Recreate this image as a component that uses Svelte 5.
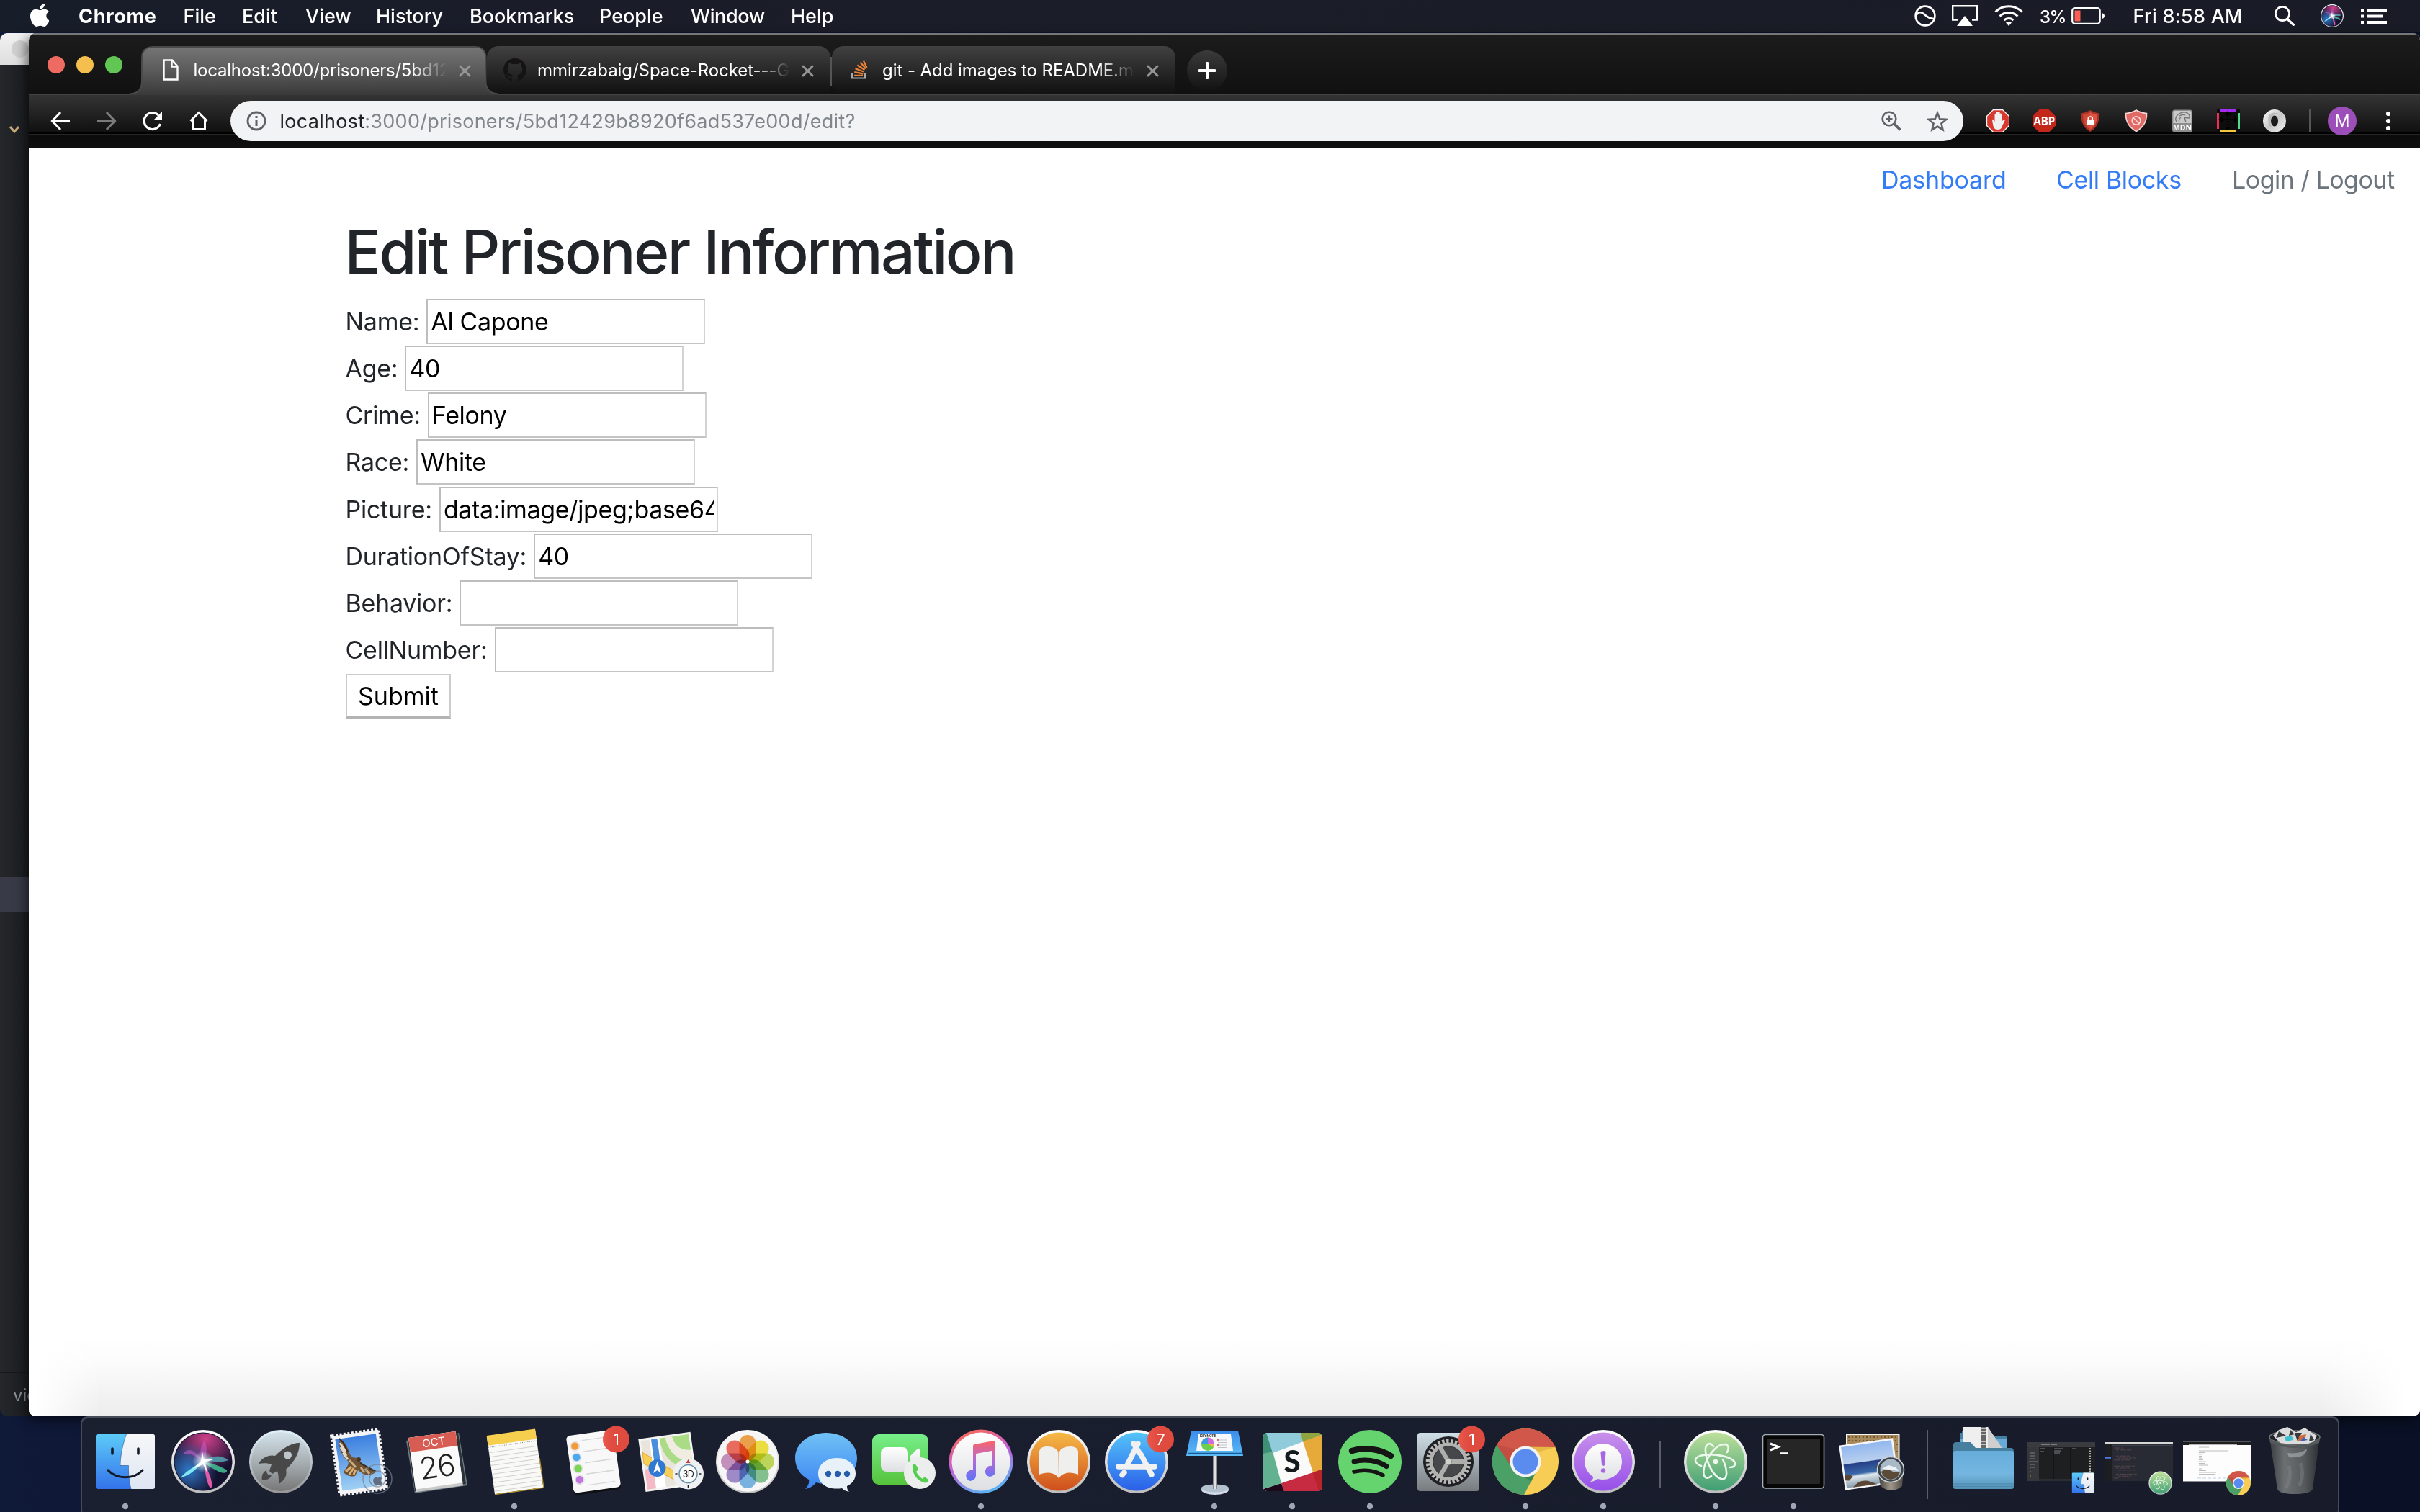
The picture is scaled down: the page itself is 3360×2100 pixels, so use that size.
<script>
  const menus = ['File', 'Edit', 'View', 'History', 'Bookmarks', 'People', 'Window', 'Help'];
  const tabs = [
    { title: 'localhost:3000/prisoners/5bd12429', icon: 'page', active: true },
    { title: 'mmirzabaig/Space-Rocket---GA', icon: 'github', active: false },
    { title: 'git - Add images to README.md', icon: 'stack', active: false }
  ];
  const fields = [
    { label: 'Name:', value: 'Al Capone' },
    { label: 'Age:', value: '40' },
    { label: 'Crime:', value: 'Felony' },
    { label: 'Race:', value: 'White' },
    { label: 'Picture:', value: 'data:image/jpeg;base64,/9j/4AAQ' },
    { label: 'DurationOfStay:', value: '40' },
    { label: 'Behavior:', value: '' },
    { label: 'CellNumber:', value: '' }
  ];
  const petals = ['#f29b38', '#f2e22e', '#bcd94a', '#7cc08a', '#6fb2e4', '#9a83c9', '#c489bd', '#f0604f'];
  const codeLines = [20, 34, 26, 8, 30, 40, 36, 12, 44, 50, 30, 38, 22, 46, 28, 10];
  const box = '-54 -63 108 133';
</script>

{#snippet finder()}
  <g>
    <rect x="-41" y="-38" width="82" height="76" rx="3" fill="url(#finderBlue)" />
    <path d="M1.5,-38 C-3,-26 -7,-8 -7,5 C-7,6 4.500,5 4.500,6 C4,18 6,30 8,38 L38,38 Q41,38 41,35 L41,-35 Q41,-38 38,-38 Z" fill="url(#finderWhite)" />
    <path d="M1.500,-38 C-3,-26 -7,-8 -7,5.500 L4.500,5.500 C4,18 6,30 8,38" fill="none" stroke="#20508c" stroke-width="1" opacity=".6" />
    <path d="M-18,-18 V-11 M18,-18 V-11" stroke="#151b26" stroke-width="3.600" stroke-linecap="round" />
    <path d="M-24,12 C-12,25 12,25 24,12" fill="none" stroke="#151b26" stroke-width="3.200" stroke-linecap="round" />
  </g>
{/snippet}

{#snippet chrome()}
  <g>
    <circle r="46" fill="#f7cd56" />
    <path d="M0,-46 A46,46 0 0 1 42,-20 L0,-20 L-20,8 L-40,-23 A46,46 0 0 1 0,-46Z" fill="#d0574a" />
    <path d="M-40,-23 A46,46 0 0 0 -2,46 L17,10 L-10,18 Z" fill="#4aa066" />
    <path d="M-40,-23 L-19,9 L-12,-17 Z" fill="#b8463a" opacity=".5" />
    <path d="M17,10 L8,28 L-4,20 Z" fill="#2f7d49" opacity=".6" />
    <path d="M0,-21 L42,-20 L20,-14 Z" fill="#d9a83a" opacity=".6" />
    <circle r="21.500" fill="#f3f3f3" />
    <circle r="17.500" fill="#5a8bef" />
  </g>
{/snippet}

{#snippet atom()}
  <g>
    <circle r="44" fill="url(#ring)" />
    <circle r="40.500" fill="url(#atomGreen)" />
    <g fill="none" stroke="#eef8ee" stroke-width="2.600" stroke-linecap="round">
      <path d="M-20,6 C-32,1 -30,-7 -17,-9 C0,-12 22,-6 26,0 C29,5 25,8 20,8" />
      <path d="M-3,-21 C-8,-28 -15,-25 -14,-14 C-13,2 -2,22 8,24 C16,26 18,14 10,-3" />
      <path d="M-6,20 C-15,28 -20,18 -14,2 C-8,-12 2,-24 12,-24 C18,-24 19,-19 16,-13" />
    </g>
    <circle r="3.200" fill="#eef8ee" />
  </g>
{/snippet}

{#snippet badge(n)}
  <circle cx="33.500" cy="-31" r="18.500" fill="#e04b40" />
  <circle cx="33.500" cy="-31" r="18.500" fill="url(#badgeGlow)" />
  <text x="33.500" y="-23.500" class="badge-text">{n}</text>
{/snippet}

{#snippet siri()}
  <g>
    <circle r="44" fill="url(#ring)" />
    <circle r="40.500" fill="#151230" />
    <circle r="39.500" fill="url(#siriTop)" />
    <circle r="39.500" fill="url(#siriLeft)" />
    <path d="M0,0 C-12,-18 -22,-20 -28,-10 C-18,-14 -8,-6 0,0 C6,-10 6,-20 2,-30 C-6,-18 -4,-8 0,0Z" fill="#c05ac8" opacity=".6" />
    <path d="M2,-2 C14,-10 28,-8 35,-2 C26,2 12,0 2,-2Z" fill="#4f9fae" opacity=".9" />
    <path d="M0,0 C12,2 28,8 33,12 C34,18 24,16 18,12 C10,8 4,4 0,0Z" fill="#3fb08a" opacity=".95" />
    <path d="M0,0 C-12,6 -24,14 -31,22 C-20,20 -8,10 0,0Z" fill="#7fe8f2" />
    <path d="M0,0 C3,12 4,28 10,37 C15,36 12,20 0,0Z" fill="#e05aa8" />
    <circle r="15" fill="url(#siriCore)" />
    <path d="M-1,-14 L1,-3 L14,-3 L3,1 L6,16 L0,4 L-14,10 L-3,-1Z" fill="#fff" opacity=".9" />
  </g>
{/snippet}

<div class="desktop">
  <svg class="defs" width="0" height="0" aria-hidden="true">
    <defs>
      <linearGradient id="finderBlue" x1="0" y1="0" x2="0" y2="1"><stop offset="0" stop-color="#5ccbf8" /><stop offset="1" stop-color="#3472ea" /></linearGradient>
      <linearGradient id="finderWhite" x1="0" y1="0" x2="0" y2="1"><stop offset="0" stop-color="#f7f7f8" /><stop offset="1" stop-color="#dde6f3" /></linearGradient>
      <linearGradient id="ring" x1="0" y1="0" x2="0" y2="1"><stop offset="0" stop-color="#ffffff" /><stop offset="1" stop-color="#bcbcbc" /></linearGradient>
      <linearGradient id="atomGreen" x1="0" y1="0" x2="0" y2="1"><stop offset="0" stop-color="#bde09a" /><stop offset="1" stop-color="#3f9e74" /></linearGradient>
      <linearGradient id="badgeGlow"><stop offset="0" stop-color="#f4695a" stop-opacity=".55" /><stop offset=".5" stop-color="#e04b40" stop-opacity="0" /></linearGradient>
      <radialGradient id="siriTop" cx=".55" cy=".1" r=".6"><stop offset="0" stop-color="#d0408a" /><stop offset="1" stop-color="#d0408a" stop-opacity="0" /></radialGradient>
      <radialGradient id="siriLeft" cx=".25" cy=".65" r=".5"><stop offset="0" stop-color="#2f78c8" /><stop offset="1" stop-color="#2f78c8" stop-opacity="0" /></radialGradient>
      <radialGradient id="siriCore"><stop offset="0" stop-color="#fff" /><stop offset="1" stop-color="#d8f0ff" stop-opacity="0" /></radialGradient>
      <linearGradient id="launch" x1="0" y1="0" x2="0" y2="1"><stop offset="0" stop-color="#d3e2ea" /><stop offset=".5" stop-color="#a8b0b4" /><stop offset="1" stop-color="#777" /></linearGradient>
      <linearGradient id="launchRing" x1="0" y1="0" x2="0" y2="1"><stop offset="0" stop-color="#e2f2fb" /><stop offset="1" stop-color="#969696" /></linearGradient>
      <linearGradient id="sky" x1="0" y1="0" x2="0" y2="1"><stop offset="0" stop-color="#3b7fe0" /><stop offset="1" stop-color="#9fd0f4" /></linearGradient>
      <linearGradient id="bubble" x1="0" y1="0" x2="0" y2="1"><stop offset="0" stop-color="#70c2f6" /><stop offset="1" stop-color="#3b84f3" /></linearGradient>
      <linearGradient id="facetime" x1="0" y1="0" x2="0" y2="1"><stop offset="0" stop-color="#76ee8a" /><stop offset="1" stop-color="#56c33c" /></linearGradient>
      <linearGradient id="paper" x1="0" y1="0" x2="0" y2="1"><stop offset="0" stop-color="#ffffff" /><stop offset="1" stop-color="#dedfe2" /></linearGradient>
      <linearGradient id="itunesRing" x1=".3" y1="0" x2=".7" y2="1"><stop offset="0" stop-color="#fb6a56" /><stop offset=".45" stop-color="#c35fd8" /><stop offset="1" stop-color="#50bdf8" /></linearGradient>
      <linearGradient id="note" x1="0" y1="0" x2="0" y2="1"><stop offset="0" stop-color="#fb6566" /><stop offset=".5" stop-color="#b06ad8" /><stop offset="1" stop-color="#5a74fa" /></linearGradient>
      <linearGradient id="books" x1="0" y1="0" x2="0" y2="1"><stop offset="0" stop-color="#f6ba46" /><stop offset="1" stop-color="#cf4e1c" /></linearGradient>
      <linearGradient id="store" x1="0" y1="0" x2="0" y2="1"><stop offset="0" stop-color="#54c4fa" /><stop offset="1" stop-color="#2a5fe8" /></linearGradient>
      <linearGradient id="board" x1="0" y1="0" x2="0" y2="1"><stop offset="0" stop-color="#3a8cea" /><stop offset="1" stop-color="#5cbcf6" /></linearGradient>
      <linearGradient id="pole"><stop offset="0" stop-color="#70757c" /><stop offset=".5" stop-color="#f5f5f5" /><stop offset="1" stop-color="#777" /></linearGradient>
      <linearGradient id="prefs" x1="0" y1="0" x2="0" y2="1"><stop offset="0" stop-color="#cfdfe8" /><stop offset="1" stop-color="#777b7e" /></linearGradient>
      <linearGradient id="feedback" x1="0" y1="0" x2="0" y2="1"><stop offset="0" stop-color="#c890ea" /><stop offset="1" stop-color="#9650ea" /></linearGradient>
      <linearGradient id="sea" x1="0" y1="0" x2="0" y2="1"><stop offset="0" stop-color="#8fb6ef" /><stop offset=".42" stop-color="#b9cfee" /><stop offset=".44" stop-color="#263f86" /><stop offset=".68" stop-color="#3968a8" /><stop offset=".74" stop-color="#dfe9ef" /><stop offset="1" stop-color="#7c93a3" /></linearGradient>
      <linearGradient id="barrel"><stop offset="0" stop-color="#3b3833" /><stop offset=".5" stop-color="#a0978a" /><stop offset="1" stop-color="#4a453e" /></linearGradient>
      <linearGradient id="folder" x1="0" y1="0" x2="0" y2="1"><stop offset="0" stop-color="#66addb" /><stop offset=".6" stop-color="#74b6e0" /><stop offset="1" stop-color="#5493b8" /></linearGradient>
      <linearGradient id="can"><stop offset="0" stop-color="#3a3d40" /><stop offset=".3" stop-color="#6c7073" /><stop offset=".7" stop-color="#55595c" /><stop offset="1" stop-color="#2b2e31" /></linearGradient>
      <linearGradient id="torus" x1="0" y1="0" x2="1" y2="1"><stop offset="0" stop-color="#fff" /><stop offset=".5" stop-color="#c8c8c8" /><stop offset="1" stop-color="#f2f2f2" /></linearGradient>
      <linearGradient id="tabFill" x1="0" y1="0" x2="0" y2="1"><stop offset="0" stop-color="#757575" /><stop offset=".5" stop-color="#5a5a5a" /><stop offset="1" stop-color="#393939" /></linearGradient>
    </defs>
  </svg>

  <header class="menubar">
    <svg class="apple" viewBox="4 32 366 448"><path fill="#fff" d="M318.700 268.700c-.2-36.700 16.400-64.400 50-84.800-18.800-26.900-47.200-41.700-84.700-44.600-35.500-2.800-74.300 20.700-88.500 20.700-15 0-49.400-19.700-76.400-19.700C63.300 141.200 4 184.800 4 273.500q0 39.300 14.400 81.200c12.800 36.700 59 126.700 107.200 125.200 25.200-.6 43-17.900 75.800-17.900 31.800 0 48.300 17.900 76.400 17.900 48.600-.7 90.400-82.500 102.600-119.300-65.200-30.700-61.700-90-61.700-91.900zm-56.600-164.200c27.300-32.400 24.800-61.900 24-72.500-24.100 1.400-52 16.400-67.900 34.900-17.500 19.800-27.800 44.300-25.600 71.900 26.100 2 49.900-11.400 69.500-34.300z" /></svg>
    <b>Chrome</b>
    {#each menus as m}<span>{m}</span>{/each}
    <i></i>
    <svg width="30" height="30" viewBox="0 0 30 30" fill="none" stroke="#fff" stroke-width="2.600"><circle cx="15" cy="15" r="13.400" /><path d="M2,15 C5,9 10,9 14,13 C18,17 22,19 27,19" /></svg>
    <svg width="36" height="30" viewBox="0 0 36 30"><path d="M8,20.500 H1.200 V1.200 H34.800 V20.500 H28" fill="none" stroke="#fff" stroke-width="2.400" /><path d="M18,15 L29,29 H7Z" fill="#fff" /></svg>
    <svg width="40" height="30" viewBox="0 0 40 30" fill="none" stroke="#fff" stroke-width="3"><path d="M1.500,9.500 A26,26 0 0 1 38.500,9.500 M7.500,15.500 A18,18 0 0 1 32.500,15.500 M13.500,21 A10,10 0 0 1 26.500,21" /><path d="M20,29 L16,24.500 Q20,22 24,24.500Z" fill="#fff" stroke="none" /></svg>
    <span class="percent">3%</span>
    <svg width="47" height="24" viewBox="0 0 47 24"><rect x="1.200" y="1.200" width="38.500" height="21.600" rx="3.500" fill="none" stroke="#fff" stroke-width="2.200" /><rect x="4.500" y="4.500" width="8" height="15" fill="#fb5f55" /><path d="M42.500,8 Q46,9 46,12 Q46,15 42.500,16Z" fill="#fff" /></svg>
    <span class="clock">Fri 8:58 AM</span>
    <svg width="30" height="28" viewBox="0 0 30 28" fill="none" stroke="#fff" stroke-width="2.600"><circle cx="11" cy="11" r="9.600" /><path d="M17.500,18 L27.500,27.500" stroke-width="3.400" /></svg>
    <svg width="32" height="32" viewBox="-44 -44 88 88">{@render siri()}</svg>
    <svg width="36" height="21" viewBox="0 0 36 21" fill="#fff"><path d="M0,0h4v4h-4zM8,0h28v4h-28zM0,8.500h4v4h-4zM8,8.500h22v4h-22zM0,17h4v4h-4zM8,17h28v4h-28z" /></svg>
  </header>

  <section class="editor">
    <div class="editor-bar"><span></span></div>
    <div class="editor-body">
      <svg width="16" height="12" viewBox="0 0 16 12"><path d="M2,2 L8,9 L14,2" fill="none" stroke="#c9a87a" stroke-width="3" /></svg>
      <div class="selected"></div>
    </div>
    <div class="editor-status">vic</div>
  </section>

  <section class="window">
    <div class="strip">
      <div class="lights"><span class="red"></span><span class="amber"></span><span class="green"></span></div>
      {#each tabs as t}
        <div class="tab" class:active={t.active}>
          {#if t.active}
            <svg class="shape" width="512" height="68" viewBox="-17 0 512 68">
              <path d="M-17,68 V66.500 C-6,66 0,61 0,49 V17 Q0,1 16,1 H462 Q477.500,1 477.500,17 V49 C477.500,61 484,66 495,66.500 V68Z" fill="url(#tabFill)" />
              <path d="M-17,66.500 C-6,66 0,61 0,49 V17 Q0,1 16,1 H462 Q477.500,1 477.500,17 V49 C477.500,61 484,66 495,66.500" fill="none" stroke="#4a4a4a" stroke-width="2" />
            </svg>
          {/if}
          <span class="fav">
            {#if t.icon === 'page'}
              <svg width="22" height="30" viewBox="0 0 22 30"><path d="M1.500,1.500 H13 L20.500,10 V28.500 H1.500Z M12.500,1.500 V10.500 H20.500" fill="none" stroke="#fff" stroke-width="2.400" /></svg>
            {:else if t.icon === 'github'}
              <svg width="32" height="32" viewBox="0 0 16 16"><path fill="#151313" d="M8 0C3.580 0 0 3.580 0 8c0 3.540 2.290 6.530 5.470 7.590.4.070.55-.17.55-.38 0-.19-.01-.82-.01-1.490-2.010.37-2.530-.49-2.690-.94-.09-.23-.48-.94-.82-1.130-.28-.15-.68-.52-.01-.53.63-.01 1.080.58 1.230.82.72 1.210 1.870.87 2.330.66.070-.52.280-.87.510-1.070-1.780-.2-3.640-.89-3.640-3.950 0-.87.310-1.590.820-2.150-.08-.2-.36-1.020.080-2.120 0 0 .67-.21 2.200.82.64-.18 1.320-.27 2-.27.680 0 1.360.090 2 .27 1.530-1.040 2.200-.82 2.200-.82.440 1.100.160 1.920.080 2.120.510.560.820 1.270.820 2.150 0 3.070-1.870 3.750-3.650 3.950.290.250.540.730.540 1.480 0 1.070-.01 1.930-.01 2.200 0 .210.150.460.550.380A8.013 8.013 0 0016 8c0-4.420-3.580-8-8-8z" /></svg>
            {:else}
              <svg width="24" height="26" viewBox="0 0 24 26" fill="none"><path d="M1,17 V24.500 H19 V17" stroke="#a9abae" stroke-width="2.200" /><path d="M4,20.800 H16 M4.300,16.200 L16.300,18.300 M5.500,11.300 L17,15.500 M8.300,6.500 L18.500,13 M12.500,2.500 L20,11.200 M17,0.500 L21.500,10" stroke="#ee8236" stroke-width="2.200" /></svg>
            {/if}
          </span>
          <span class="title">{t.title}</span>
          <svg class="close" width="17" height="17" viewBox="0 0 17 17"><path d="M2,2 L15,15 M15,2 L2,15" stroke="#969696" stroke-width="3" stroke-linecap="round" /></svg>
        </div>
      {/each}
      <div class="plus"><svg width="24" height="24" viewBox="0 0 24 24"><path d="M12,1.500 V22.500 M1.500,12 H22.500" stroke="#fff" stroke-width="4" stroke-linecap="round" /></svg></div>
    </div>

    <div class="toolbar">
      <span class="tool"><svg width="28" height="28" viewBox="0 0 28 28"><path d="M27,14 H3 M14,2 L2.500,14 L14,26" fill="none" stroke="#fff" stroke-width="3" /></svg></span>
      <span class="tool"><svg width="28" height="28" viewBox="0 0 28 28"><path d="M1,14 H25 M14,2 L25.500,14 L14,26" fill="none" stroke="#7a7a7a" stroke-width="3" /></svg></span>
      <span class="tool"><svg width="28" height="28" viewBox="0 0 28 28"><path d="M24.500,18 A11.500,11.500 0 1 1 22,6" fill="none" stroke="#fff" stroke-width="3.200" /><path d="M27,1 V12 H16Z" fill="#fff" /></svg></span>
      <span class="tool"><svg width="28" height="28" viewBox="0 0 28 28"><path d="M2.500,14 L14,2.500 L25.500,14 M5.500,12 V25.500 H22.500 V12" fill="none" stroke="#fff" stroke-width="3" /></svg></span>
      <div class="omnibox">
        <svg width="28" height="28" viewBox="0 0 28 28"><circle cx="14" cy="14" r="12" fill="none" stroke="#5f6368" stroke-width="2.800" /><path d="M14,7 V10 M14,12.300 V21" stroke="#5f6368" stroke-width="3" /></svg>
        <span class="url"><em>localhost</em>:3000/prisoners/5bd12429b8920f6ad537e00d/edit?</span>
        <svg class="zoomed" width="28" height="28" viewBox="0 0 28 28" fill="none" stroke="#5f6368"><circle cx="11" cy="11" r="9.300" stroke-width="2.600" /><path d="M17.500,17.500 L26.500,26.500" stroke-width="3.800" /><path d="M11,6.500 V15.500 M6.500,11 H15.500" stroke-width="2.200" /></svg>
        <svg class="star" width="30" height="29" viewBox="0 0 30 29"><path d="M15,3 L18.300,11.200 L27.200,11.900 L20.400,17.600 L22.500,26.200 L15,21.600 L7.500,26.200 L9.600,17.600 L2.800,11.900 L11.700,11.200Z" fill="none" stroke="#5f6368" stroke-width="2.600" /></svg>
      </div>
      <div class="extensions">
        <svg width="32" height="32" viewBox="0 0 32 32"><path d="M9.500,0.500 H22.500 L31.500,9.500 V22.500 L22.500,31.500 H9.500 L.5,22.500 V9.500Z" fill="#d8392f" stroke="#fff" stroke-width="1.300" /><path d="M8.500,18 Q7.500,13 9.500,14 L11.500,17 V6.500 Q12.700,5 13.700,6.500 V4 Q15,2.500 16.200,4 V4 Q17.500,2.800 18.700,4.300 V6 Q20,5 21.200,6.500 V17 L23.500,14.500 Q26,13.500 25.500,15.500 L21.500,24 Q20.500,28 16,28 Q10.500,28 9.500,23Z" fill="#f0f0f0" /></svg>
        <svg width="32" height="32" viewBox="0 0 32 32"><path d="M9.500,0 H22.500 L32,9.500 V22.500 L22.500,32 H9.500 L0,22.500 V9.500Z" fill="#c22719" /><text x="16" y="21.700" class="abp">ABP</text></svg>
        <svg width="32" height="32" viewBox="0 0 32 32"><path d="M16,1 Q22,4.500 29,5.500 Q29,24 16,31 Q3,24 3,5.500 Q10,4.500 16,1Z" fill="#a83225" /><path d="M16,4 Q21,7 26,7.700 Q26,22 16,28Z" fill="#dd5443" /><path d="M16,4 Q11,7 6,7.700 Q6,22 16,28Z" fill="#cf4838" /><rect x="11.500" y="14.500" width="9.500" height="6.500" fill="#fff" /><path d="M13.300,15 V12.500 Q13.300,10 16.200,10 Q19.200,10 19.200,12.500 V15" fill="none" stroke="#fff" stroke-width="1.600" /></svg>
        <svg width="32" height="32" viewBox="0 0 32 32"><path d="M16,1 Q21,4.500 30.500,5.500 Q31,22 16,30.500 Q1,22 1.500,5.500 Q11,4.500 16,1Z" fill="#e26a66" stroke="#f3d5d3" stroke-width="1.600" /><circle cx="16" cy="15.500" r="5.800" fill="none" stroke="#f6dcdb" stroke-width="1.600" /><path d="M12,11.500 L20,19.500" stroke="#f6dcdb" stroke-width="1.600" /></svg>
        <svg width="32" height="32" viewBox="0 0 32 32"><rect x="2" y=".5" width="28" height="31" rx="3.500" fill="#8c8c8c" /><path d="M3.500,4 Q3.500,2 5.500,2 H26.500 Q28.500,2 28.500,4 V19 H3.500Z" fill="#c9c9c9" /><path d="M9,18 Q4,13 10,7 Q17,2 23,5 Q27,8 26,12 Q22,12 19,11 L21,18 M12,9 Q17,6 20,8 M12,18 Q10,14 14,11" fill="none" stroke="#777" stroke-width="1.400" /><text x="16" y="29" class="mdn">MDN</text></svg>
        <svg width="32" height="32" viewBox="0 0 32 32"><rect width="32" height="32" fill="#0d0d0d" /><path d="M5,1.500 H27" stroke="#a32cf0" stroke-width="3" /><path d="M5,30.500 H27" stroke="#f2c93c" stroke-width="3" /><path d="M1.500,5 V27" stroke="#f02c5c" stroke-width="3" /><path d="M30.500,5 V27" stroke="#55d98a" stroke-width="3" /><path d="M15,2 L19,8 H11Z M15,29 L11,24 H19Z M2,14 L9,9.500 V18.500Z M29,14 L24,9.500 V18.500Z" fill="#000" /><path d="M9,14 H24 M15,8 V24" stroke="#000" stroke-width="2" stroke-dasharray="2 2" /></svg>
        <svg width="32" height="32" viewBox="0 0 32 32"><path fill-rule="evenodd" d="M16,0 A16,16 0 1 1 15.990,0Z M16,8.500 A5,7.500 0 1 0 16.010,8.500Z" fill="url(#torus)" /><path d="M8,8 Q14,2 22,6 Q14,5 11,14 Q9,22 14,27 Q5,22 8,8Z" fill="#9d9d9d" opacity=".5" /></svg>
      </div>
      <span class="rule"></span>
      <span class="avatar">M</span>
      <svg class="dots" width="8" height="28" viewBox="0 0 8 28" fill="#fff"><circle cx="4" cy="4" r="3.100" /><circle cx="4" cy="14" r="3.100" /><circle cx="4" cy="24" r="3.100" /></svg>
    </div>

    <div class="page">
      <nav><a class="n1">Dashboard</a><a class="n2">Cell Blocks</a><a class="n3">Login / Logout</a></nav>
      <div class="container">
        <h1>Edit Prisoner Information</h1>
        <form>
          {#each fields as f}
            <label><span>{f.label}</span><input type="text" value={f.value} /></label>
          {/each}
          <button type="button">Submit</button>
        </form>
      </div>
    </div>
  </section>

  <footer class="dock">
    <svg class="app" viewBox={box}>{@render finder()}<circle class="run" cy="62" r="4.200" /></svg>
    <svg class="app" viewBox={box}>{@render siri()}</svg>
    <svg class="app" viewBox={box}>
      <circle r="44" fill="url(#launchRing)" /><circle r="41" fill="url(#launch)" />
      <g fill="#484848"><path d="M26,-26 C14,-26 2,-18 -8,-8 C-16,-10 -26,-6 -31,3 C-24,2 -18,2 -13,4 L-16,13 L-12,17 L-5,13 C-3,18 -3,24 -3,31 C5,26 9,20 7,11 C19,0 26,-12 26,-26Z" /><path d="M-20,12 C-26,15 -27,21 -26,26 C-20,26 -15,24 -13,19 C-17,20 -20,17 -20,12Z" /></g>
      <circle cx="9.500" cy="-9" r="5.500" fill="#bcc6cb" />
    </svg>
    <svg class="app" viewBox={box}>
      <g transform="rotate(-8)">
        <rect x="-32" y="-40" width="65" height="82" fill="#f4f4f6" stroke="#f4f4f6" stroke-width="5" stroke-dasharray="3 2.500" />
        <rect x="-28" y="-35" width="57" height="72" fill="url(#sky)" />
      </g>
      <path d="M-26,-31 C-20,-29 -15,-20 -12,-10 C-8,-3 -4,-7 1,-4 L2,0 C8,6 16,10 24,13 C22,18 14,20 6,17 L-1,12 L-5,20 C-12,22 -18,18 -21,15 C-18,9 -14,6 -14,0 C-24,-8 -29,-20 -26,-31Z" fill="#6f5136" />
      <path d="M-26,-26 L-18,-14 M-25,-20 L-17,-8 M-22,-12 L-15,-3" stroke="#e2d8c4" stroke-width="3" fill="none" />
      <path d="M-13,-2 L-4,8 M3,8 L8,15 M9,10 L15,17" stroke="#c9ab7c" stroke-width="3" fill="none" />
      <path d="M-18,14 L-10,7 M-13,18 L-7,9 M-7,18 L-4,11" stroke="#d9b070" stroke-width="3" fill="none" />
      <path d="M-27,-32 L-21,-26 L-15,-13 M2,2 L24,14" stroke="#3c2d20" stroke-width="2" fill="none" />
      <circle cx="0" cy="-3" r="3" fill="#4a3626" />
      <g fill="none" stroke="#77808f" stroke-width="1.500" opacity=".7"><circle cx="26" cy="24" r="20" /><circle cx="26" cy="24" r="11" /></g><path transform="translate(20,17) scale(.034)" fill="#646d80" d="M318 268c0-36 16-64 50-84-19-27-47-42-85-45-35-3-74 21-88 21-15 0-49-20-76-20C63 141 4 185 4 273c0 26 5 53 14 81 13 37 59 127 107 126 25-1 43-18 76-18 32 0 48 18 76 18 49-1 90-83 103-120-65-30-62-90-62-92z" />
    </svg>
    <svg class="app" viewBox={box}>
      <path d="M-42,-29 L31,-40 L43,33 L-30,44Z" fill="#6d7b82" /><path d="M-40,-30 L30,-40 L41,31 L-30,41Z" fill="#2a3338" />
      <g transform="rotate(-8)"><rect x="-34" y="-38" width="66" height="76" fill="#c9c9c9" /><rect x="-34" y="-38" width="66" height="72" fill="#fafafa" /><rect x="-34" y="-38" width="66" height="20" fill="#d75c54" /><text x="0" y="-22" class="oct">OCT</text><text x="0" y="22" class="day">26</text></g>
    </svg>
    <svg class="app" viewBox={box}>
      <g transform="rotate(-8)"><rect x="-33" y="-39" width="68" height="80" fill="#f9f9f7" /><rect x="-33" y="-41" width="68" height="14" fill="#f6cf4e" /><path d="M-33,-24.500 H35" stroke="#777" stroke-width="1" stroke-dasharray="1 1.500" />{#each Array(10) as _, i}<path d="M-33 {-17 + i * 6} h68" stroke="#cfcfcb" stroke-width="1" />{/each}<path d="M-33,41.500 H35.500 V0" fill="none" stroke="#b9962e" stroke-width="1.200" /></g>
      <circle class="run" cy="62" r="4.200" />
    </svg>
    <svg class="app" viewBox={box}>
      <g transform="rotate(-8)"><rect x="-31" y="-38" width="66" height="81" rx="5" fill="#0e0f12" /><rect x="-31" y="-40" width="66" height="80" rx="5" fill="#f8f8f9" />{#each ['#f39b38', '#4aa8f0', '#7cd455', '#c177df'] as c, i}<circle cx="-20.500" cy={-24.500 + i * 15.700} r="7" fill="#e4e4e6" /><circle cx="-20.500" cy={-24.500 + i * 15.700} r="5.200" fill={c} /><path d="M-10 {-31 + i * 15.700} h38 M-10 {-15.500 + i * 15.700} h38" stroke="#d8d8da" stroke-width="1.200" />{/each}</g>
      {@render badge('1')}
    </svg>
    <svg class="app" viewBox={box}>
      <g transform="rotate(-8)">
        <rect x="-39" y="-37" width="73" height="74" fill="#f4f4f2" /><rect x="-36" y="-34" width="67" height="68" fill="#e9e4dc" />
        <path d="M-10,-34 H31 V14 Q-8,8 -10,-34Z" fill="#a9dc85" /><path d="M2,-34 H8 Q10,-14 31,-12 V4 Q2,0 -2,-34Z" fill="#f0ece2" />
        <path d="M-36,-18 L14,22 L14,34 L-36,-2Z" fill="#f7cf54" stroke="#e0a93c" stroke-width="1" /><rect x="-36" y="6" width="14" height="28" fill="#f3b9c4" /><path d="M-24,-34 H-10 V34 H-24Z" fill="#fff" /><path d="M-21.500,-34 H-13 V4 H-21.500Z" fill="#4a8fdc" />
      </g>
      <circle cx="-17.500" cy="9" r="12" fill="#2f78d4" /><path d="M-17.500,0 L-12,16 L-17.500,12 L-23,16Z" fill="#fff" />
      <circle cx="25.500" cy="17" r="21.500" fill="#eef0f2" /><circle cx="25.500" cy="17" r="12.500" fill="#fbfbfb" stroke="#5e8ea8" stroke-width="1.600" /><path d="M25.500,-3 L28.500,2 H22.500Z" fill="#d03a2e" /><path d="M7.500,17 h3 M40.500,17 h3 M25.500,33 v3" stroke="#222" stroke-width="1.600" /><text x="25.500" y="21.500" class="three-d">3D</text>
    </svg>
    <svg class="app" viewBox={box}>
      <circle r="44" fill="url(#ring)" /><circle r="42" fill="#f6f6f6" /><g class="petals">{#each petals as c, i}<rect x="-11.500" y="-37" width="23" height="36" rx="11.500" fill={c} transform="rotate({i * 45})" />{/each}</g><circle r="2.500" fill="#fff" />
    </svg>
    <svg class="app" viewBox={box}>
      <path d="M1,-40 C25,-40 44,-25 44,-5 C44,16 25,31 1,31 C-4,31 -9,30 -13,29 C-16,33 -21,37 -28,38 C-24,34 -22,29 -23,25 C-35,19 -42,8 -42,-5 C-42,-25 -23,-40 1,-40Z" fill="url(#bubble)" />
      <path d="M16,-5 C31,-5 42,4 42,16.500 C42,24 38,30 30,34 C30,38 31,40 33,42 C28,41 25,39 23,37 C5,40 -10,32 -10,16.500 C-10,4 1,-5 16,-5Z" fill="#e9f1f8" />
      <circle cx="4" cy="17" r="4.200" fill="#275eaa" /><circle cx="17" cy="17" r="4.200" fill="#275eaa" /><circle cx="30" cy="17" r="4.200" fill="#275eaa" />
    </svg>
    <svg class="app" viewBox={box}>
      <rect x="-43" y="-38" width="78" height="70" rx="9" fill="url(#facetime)" /><rect x="-31" y="-20" width="38" height="34" rx="8" fill="url(#paper)" /><path d="M10,-8 L20,-18 Q24,-19 24,-14 V8 L10,2Z" fill="url(#paper)" />
      <circle cx="23" cy="16" r="22" fill="#eceeed" /><path d="M13,5 Q16,2 18,5 L21,10 Q21,12 18,14 Q21,20 27,24 Q29,21 31,22 L35,25 Q36,27 33,29 Q28,31 20,24 Q12,16 13,5Z" fill="#55cf50" />
    </svg>
    <svg class="app" viewBox={box}>
      <circle r="44.500" fill="url(#itunesRing)" /><circle r="40.500" fill="url(#paper)" />
      <path d="M-11,-22 Q-11,-23.500 -9,-24 L18,-29 Q20,-29 20,-27 V13 A8.500,7 0 0 1 12,21 A7.500,7.500 0 1 1 15,6 V-15 L-7,-11 V18 A8.500,8 0 0 1 -15,27 A7.500,7.500 0 1 1 -11,12Z" fill="url(#note)" />
      <circle class="run" cy="62" r="4.200" />
    </svg>
    <svg class="app" viewBox={box}>
      <circle r="44" fill="url(#ring)" /><circle r="40.500" fill="url(#books)" /><path d="M0,23 C-6,14 -18,14 -27,18 V-13 C-27,-19 -22,-21 -16,-21 C-8,-21 -2,-18 -.6,-13 Z M.2,23 C6,14 18,14 27,18 V-13 C27,-19 22,-21 16,-21 C8,-21 2,-18 .8,-13Z" fill="#efefee" />
    </svg>
    <svg class="app" viewBox={box}>
      <circle r="44" fill="url(#ring)" /><circle r="40.500" fill="url(#store)" /><g stroke="#f1f1f2" stroke-width="7.500" stroke-linecap="round"><path d="M2,-25 L-13,5" /><path d="M-4,-25 L4,-12 M6,-10 L21,18" /><path d="M-25,7 H25" /><path d="M-17,15 L-20,18.500" /></g>{@render badge('7')}
    </svg>
    <svg class="app" viewBox={box}>
      <ellipse cx="1" cy="39" rx="19" ry="7" fill="#d3dde8" /><ellipse cx="1" cy="37" rx="19" ry="5.500" fill="#b3c0cf" /><rect x="-2" y="-8" width="6" height="46" fill="url(#pole)" />
      <path d="M-32,-43 H33 L40,-8 H-39Z" fill="url(#board)" /><path d="M-37,-11.500 H38" stroke="#175a94" stroke-width="1.400" /><path d="M-22,-38 H23 L26,-15 H-25Z" fill="#f7f8fa" /><text x="-20" y="-34" class="keynote">KEYNOTE</text>
      <circle cx="-9" cy="-24.500" r="9" fill="#f0b83c" /><path d="M-9,-24.500 V-33.500 A9,9 0 0 0 -18,-24.500Z" fill="#3b9be0" /><path d="M-9,-24.500 H-18 A9,9 0 0 0 -1,-20Z" fill="#6bcf50" /><path d="M-9,-24.500 V-33.500 A9,9 0 0 1 0,-24.500Z" fill="#d36adf" /><path d="M5,-30 h12 M5,-26.500 h12 M5,-23 h12 M5,-19.500 h12" stroke="#bfc3c8" stroke-width="1" /><path d="M4,-30 h2 M4,-23 h2" stroke="#d0444c" stroke-width="1.600" />
      <circle class="run" cy="62" r="4.200" />
    </svg>
    <svg class="app" viewBox={box}>
      <clipPath id="slackClip"><rect x="-40" y="-40" width="81" height="81" rx="5" /></clipPath>
      <g clip-path="url(#slackClip)"><rect x="-40" y="-40" width="81" height="81" fill="#fafafa" /><path d="M-40,-40 H-34 L-27,-13 L-40,-10Z" fill="#3d8f76" /><path d="M-36,-40 H12 L16,-28 L-27,-12Z" fill="#8fcbda" /><path d="M12,-40 H41 V-37 L15,-27Z" fill="#8fa53f" /><path d="M15,-28 L41,-37 V12 L29,15Z" fill="#e6aa3b" /><path d="M29,15 L41,11 V41 H-11 L-15,30Z" fill="#c72b42" /><path d="M29,15 L41,11 V41 H37Z" fill="#b8242a" /><path d="M-15,30 L-11,41 H-40 V38Z" fill="#1c0a1c" /><path d="M-40,-11 L-27,-14 L-15,30 L-40,38Z" fill="#62b291" /></g>
      <text x="0" y="15" class="slack">S</text><circle class="run" cy="62" r="4.200" />
    </svg>
    <svg class="app" viewBox={box}>
      <circle r="44" fill="#65d36e" /><g fill="none" stroke="#151515" stroke-linecap="round"><path d="M-25,-15 C-8,-20 14,-18 29,-8" stroke-width="8.500" /><path d="M-22,0 C-8,-4 10,-2 23,6.500" stroke-width="7" /><path d="M-22,14 C-8,11 6,12 18,19" stroke-width="5.500" /></g><circle class="run" cy="62" r="4.200" />
    </svg>
    <svg class="app" viewBox={box}>
      <rect x="-42" y="-40" width="86" height="81" rx="4" fill="url(#prefs)" /><circle cx="1" r="35" fill="#202124" /><circle cx="1" r="28" fill="none" stroke="#bbb" stroke-width="6.500" stroke-dasharray="3.300 2.560" /><circle cx="1" r="24" fill="none" stroke="#b2b2b0" stroke-width="5" /><circle cx="1" r="21" fill="#45474a" /><path d="M1,0 L24,0 M1,0 L-10,-19 M1,0 L-10,19" stroke="#aeaeac" stroke-width="6" /><circle cx="1" r="4.500" fill="#d0d0ce" stroke="#888" />{@render badge('1')}
    </svg>
    <svg class="app" viewBox={box}>{@render chrome()}<circle class="run" cy="62" r="4.200" /></svg>
    <svg class="app" viewBox={box}>
      <circle r="44" fill="url(#ring)" /><circle r="40.500" fill="url(#feedback)" /><path d="M0,-25 A26,25 0 0 1 0,25 Q-4,25 -8,24 Q-13,28 -18,28 Q-13,24 -14,21 A26,25 0 0 1 0,-25Z" fill="url(#paper)" /><path d="M-3.500,-12 Q-3.500,-15 0,-15 Q3.500,-15 3.500,-12 L2,5 Q0,7 -2,5Z" fill="#a868e2" /><circle cy="12.500" r="3.200" fill="#a868e2" /><circle class="run" cy="62" r="4.200" />
    </svg>
    <span class="split short"></span>
    <svg class="app" viewBox={box}>{@render atom()}<circle class="run" cy="62" r="4.200" /></svg>
    <svg class="app" viewBox={box}>
      <rect x="-42.500" y="-37.500" width="85" height="74.500" rx="4" fill="#060606" stroke="#a4adb1" stroke-width="1.600" /><rect x="-37" y="-32" width="74" height="63" fill="#262626" /><path d="M-32,-25 L-21,-20.500 L-32,-16" fill="none" stroke="#fff" stroke-width="3" /><path d="M-19,-11.500 H-7" stroke="#fff" stroke-width="2.600" /><circle class="run" cy="62" r="4.200" />
    </svg>
    <svg class="app" viewBox={box}>
      <rect x="-34" y="-38" width="72.500" height="56" fill="#a68a5c" stroke="#f4f4f4" stroke-width="2" /><path d="M-32,-34 H37 M-32,-29 H37 M30,-24 H37 M30,-14 H37" stroke="#735831" stroke-width="2" stroke-dasharray="2 3" />
      <g transform="rotate(-8)"><rect x="-40" y="-27" width="73" height="60" fill="url(#sea)" stroke="#f6f6f6" stroke-width="2.600" /><path d="M-39,14 Q-32,12 -28,17 L-34,22 L-39,21Z M-30,32 Q-20,22 -8,26 L4,32Z M4,8 Q14,4 22,10 L12,14Z" fill="#5b4636" /></g>
      <path d="M9,12 L13,34 Q28,46 43,34 L45,12Z" fill="url(#barrel)" /><ellipse cx="27" cy="11" rx="18.500" ry="17.500" fill="#3b4248" stroke="#cfd4d6" stroke-width="1.600" /><circle cx="27" cy="11" r="14.500" fill="#a9b9c8" /><path d="M14,14 Q22,8 30,14 L40,14 Q38,24 27,25 Q17,24 14,14Z" fill="#5c4a38" /><path d="M15,10 L24,5 L34,8 L39,13 L24,11Z" fill="#edf2f5" />
    </svg>
    <span class="split"></span>
    <svg class="app" viewBox={box}>
      <path d="M-33,-10 V-40 H-30 V-42 H-8 L-4,-36 H28 Q33,-36 33,-31 V-10Z" fill="#4681a4" /><path d="M-33,-31 H33 V-10 H-33Z" fill="#67abd6" /><path d="M-28,-48 H6 L26,-18 H-28Z" fill="#efefef" /><path d="M6,-48 L6,-18 H26Z" fill="#cfcfcf" /><rect x="-4" y="-48" width="8" height="30" fill="#666" /><path d="M-4,-46 h8 M-4,-42 h8 M-4,-38 h8 M-4,-28 h8 M-4,-24 h8" stroke="#ddd" stroke-width="1.600" />
      <path d="M-42,0 V-23 Q-42,-27 -38,-27 H-18 L-11,-19 H38 Q42,-19 42,-14 V0Z" fill="#477f9f" /><path d="M-42,-12 Q-42,-15 -39,-15 H39 Q42,-15 42,-12 V35 Q42,38 39,38 H-39 Q-42,38 -42,35Z" fill="url(#folder)" /><path d="M-42,31 H42 M-42,34.500 H42" stroke="#4c86a8" stroke-width="1" />
    </svg>
    <svg class="app" viewBox={box}>
      <rect x="-47" y="-27" width="94" height="54" fill="#1e1f21" /><path d="M-47,-27 H47 V-20 H-47Z" fill="#3a3b3e" /><path d="M-47,-20 H-31 V27 H-47Z" fill="#35373b" /><path d="M-31,24 H47 V27 H-31Z" fill="#2c2d30" /><path d="M-11,-20 V24 M13,-20 V24" stroke="#0c0c0e" stroke-width="1" /><path d="M-44,-12 h8 M-44,-8 h8 M-44,-4 h8 M-45,0 h12 M-44,4 h8 M-44,8 h8 M-30,-18 h8 M-30,-14 h6 M-10,-18 h12 M-10,-15 h9 M-10,-12 h8 M15,-18 h6 M-28,25.500 h24 M-28,-23.500 h12 M-14,-23.500 h8" stroke="#7b7e83" stroke-width="1.100" /><path d="M-44,14 h1.500 M-44,20 h1.500" stroke="#d8a03c" stroke-width="1.500" /><path d="M40,-19 V14" stroke="#cfcfcf" stroke-width="1.600" stroke-dasharray="2 1.500" />
      <g transform="translate(30,29.500) scale(.37)">{@render finder()}</g>
    </svg>
    <svg class="app" viewBox={box}>
      <rect x="-47" y="-27" width="94" height="54" fill="#282b33" /><rect x="-47" y="-27" width="94" height="2" fill="#d8d8d8" /><path d="M-47,-25 H-37 V27 H-47Z" fill="#1c1e22" /><path d="M-37,-22 H47" stroke="#3c424e" stroke-width="2" /><rect x="-47" y="-6" width="8" height="1.800" fill="#4a78e0" />{#each codeLines as w, i}<path d="M{-35 + (i % 3) * 3} {-19 + i * 2.800} h{w / 1.600}" stroke={i % 2 ? '#6a5a52' : '#7a4f68'} stroke-width="1" stroke-dasharray="4 1" opacity=".6" />{/each}
      <g transform="translate(29.500,29.700) scale(.367)">{@render atom()}</g>
    </svg>
    <svg class="app" viewBox={box}>
      <rect x="-47" y="-27.500" width="94" height="55" fill="#fdfdfd" /><rect x="-47" y="-27.500" width="94" height="4.500" fill="#1e1e1e" /><path d="M-39,-24 H28" stroke="#e8e8e8" stroke-width="1.300" />{#each [14, 40, 40, 9, 4, 5, 4, 6, 10, 8, 12, 9, 4, 10, 24, 22] as w, i}<path d="M-25 {-20 + i * 2.500} h{w}" stroke="#777" stroke-width=".8" opacity=".6" />{/each}<path d="M-27,23 H20" stroke="#bdd0ea" stroke-width="1" stroke-dasharray="5 2" />
      <g transform="translate(30,30) scale(.37)">{@render chrome()}</g>
    </svg>
    <svg class="app" viewBox={box}>
      <path d="M-35,-34 L-24,38 Q-22,45 0,45 Q22,45 25,38 L35,-34Z" fill="url(#can)" /><ellipse cy="-34" rx="35" ry="9" fill="#202326" stroke="#73777a" stroke-width="1.600" />
      <path d="M-30,-36 L-22,-44 L-10,-48 L2,-41 L14,-47 L24,-40 L31,-36 L26,-26 L12,-24 L-6,-24 L-20,-26Z" fill="#dcdcdc" /><path d="M-22,-42 L-12,-36 L-26,-33Z M0,-40 L4,-28 L10,-40Z M22,-39 L27,-30 L20,-28Z M-6,-44 L0,-38 L-8,-36Z" fill="#37393d" /><path d="M-14,-34 L-4,-36 L-2,-30 L-12,-28Z" fill="#3dbfcf" /><path d="M6,-36 L16,-38 L14,-30 L5,-28Z" fill="#cf6a3e" /><path d="M12,-34 L18,-30 L8,-28Z" fill="#3b64b8" />
      <path d="M-35,-32 Q-18,-22 0,-22 Q18,-22 35,-32 L34,-26 Q0,-12 -34,-26Z" fill="#54585b" /><path d="M-10,-12 Q8,-10 17,-18 Q16,-4 -8,-6Z" fill="#b5b9bb" opacity=".55" /><path d="M-8,6 Q-4,24 -12,36 M8,2 Q14,20 6,34" stroke="#8f9396" stroke-width="5" fill="none" opacity=".3" />
    </svg>
  </footer>
</div>

<style>
  :global(body) { background: #0b1330; overflow: hidden; }
  .desktop { position: relative; width: 3360px; height: 2100px; overflow: hidden; background: linear-gradient(90deg, #0f1938, #0a1029 60%, #0a1126); font-family: Inter, 'Liberation Sans', sans-serif; }
  .defs { position: absolute; }

  .menubar { display: grid; grid-template-columns: 68px 145.500px 81.500px 88px 98px 130px 180px 128px 138px 100px 1fr 52px 59px 62px 45px 84.500px 197.500px 64px 56px 82px; align-items: center; height: 44px; padding-left: 40px; box-sizing: border-box; background: linear-gradient(90deg, #181d2a, #1b1d28 40%, #191c26); color: #fff; font-size: 27px; font-weight: 500; line-height: 42px; white-space: nowrap; }
  .menubar b, .menubar span { padding: 2px 0 0 1px; }
  .menubar b { font-weight: 700; letter-spacing: .7px; }
  .menubar span:nth-of-type(7) { letter-spacing: -.4px; padding-left: 0; }
  .menubar .percent { font-size: 24px; letter-spacing: -1.500px; line-height: 41px; }
  .menubar .clock { letter-spacing: .23px; }
  .apple { width: 26px; height: 32px; margin: 0 0 3px 2px; }

  .editor { position: absolute; left: 0; top: 46px; width: 60px; height: 1921px; border-radius: 10px; overflow: hidden; display: flex; flex-direction: column; background: linear-gradient(90deg, #24272b, #1b1d20 70%); }
  .editor-bar { height: 44px; background: linear-gradient(#f2f2f2, #dedede); display: flex; align-items: center; padding-left: 16px; }
  .editor-bar span { width: 24px; height: 24px; border-radius: 50%; background: #d0d0d0; }
  .editor-body { flex: 1; border-bottom: 2px solid #15171a; }
  .editor-body svg { display: block; margin: 84px 0 0 12px; }
  .selected { height: 48px; margin-top: 1032px; background: #383b47; }
  .editor-status { height: 60px; padding-left: 18px; line-height: 62px; font-size: 24px; color: #8b9099; }

  .window { position: absolute; left: 40px; top: 46px; width: 3320px; height: 1921px; border-radius: 10px; overflow: hidden; display: flex; flex-direction: column; background: #fff; box-shadow: -4px 6px 16px rgba(0, 0, 0, .55); }
  .strip { display: flex; height: 84px; padding-left: 26px; background: linear-gradient(#1c1c1c, #111); box-shadow: inset 0 2px #777; flex: none; }
  .lights { display: flex; gap: 16px; width: 131px; padding-top: 32px; }
  .lights span { width: 24px; height: 24px; border-radius: 50%; }
  .red { background: #ed6b60; }
  .amber { background: #f5bf50; }
  .green { background: #62c655; }
  .tab { position: relative; display: grid; grid-template-columns: 70px 351px 16px 17px; align-items: center; width: 477px; height: 66px; margin: 18px 1px 0 1px; border-radius: 16px 16px 0 14px; background: linear-gradient(#414141, #131313 95%); }
  .tab.active { background: none; z-index: 1; width: 478px; margin: 18px 0 0; grid-template-columns: 71.500px 351px 17px 17px; }
  .tab:not(.active) + .tab:not(.active)::before { content: ''; position: absolute; left: -2px; top: 15px; width: 2px; height: 40px; background: #555; }
  .shape { position: absolute; left: -17px; top: 0; }
  .fav { position: relative; display: flex; justify-content: center; padding-left: 8px; }
  .fav svg { display: block; }
  .title { position: relative; padding-top: 2px; font-size: 24px; line-height: 64px; color: #fff; white-space: nowrap; overflow: hidden; letter-spacing: -.06px; mask-image: linear-gradient(90deg, #000 86%, transparent 100%); }
  .active .title { letter-spacing: -.22px; }
  .close { position: relative; top: 1px; grid-column: 4; }
  .plus { width: 56px; height: 56px; margin: 24px 0 0 15px; border-radius: 50%; background: linear-gradient(#3a3a3a, #131313); display: flex; align-items: center; justify-content: center; }

  .toolbar { display: flex; align-items: center; height: 76px; flex: none; padding-left: 12px; background: linear-gradient(#434343 0 2px, #343434 2px, #101010 54px, #000 54px 56px, #262626 56px 58px, #0b0b0b 58px, #101010); }
  .tool { display: flex; justify-content: center; width: 64px; }
  .omnibox { display: flex; align-items: center; width: 2406px; height: 56px; margin-left: 12px; padding: 0 21px 0 22px; box-sizing: border-box; border-radius: 28px; background: #f1f3f4; }
  .url { flex: 1; margin-left: 18.500px; padding-top: 1px; font-size: 27px; line-height: 55px; letter-spacing: .27px; color: #80868b; }
  .url em { font-style: normal; color: #202124; }
  .zoomed { margin-right: 35px; }
  .extensions { display: grid; grid-template-columns: repeat(7, 64px); justify-items: center; margin-left: 16px; }
  .abp { font: 700 15.500px 'Open Sans', sans-serif; fill: #fff; text-anchor: middle; letter-spacing: -.4px; }
  .mdn { font: 700 10.500px 'Open Sans', sans-serif; fill: #fff; text-anchor: middle; }
  .rule { width: 2px; height: 32px; margin: 0 16px; background: #555; }
  .avatar { width: 40px; height: 40px; margin: 0 8px; border-radius: 50%; background: #9c4fb8; color: #fff; font: 24px/41px Roboto, sans-serif; text-align: center; }
  .dots { margin-left: 32px; }

  .page { flex: 1; background: linear-gradient(90deg, #fff 10px, transparent 100px, transparent 3180px, #fff 3300px) 0 100% / 100% 110px no-repeat, linear-gradient(#fff, #fbfbfb 35%, #ececec) 0 100% / 100% 110px no-repeat, #fff; }
  nav { display: grid; grid-template-columns: 243px 244px 261px; justify-content: end; font-size: 34px; line-height: 87px; white-space: nowrap; color: #347cf6; }
  .n1 { letter-spacing: -.2px; }
  .n2 { letter-spacing: -.35px; }
  .n3 { letter-spacing: -.47px; color: #6c757d; }
  .container { padding: 7px 0 0 440px; }
  h1 { margin: 0 0 14px -1.500px; font-size: 84px; font-weight: 500; line-height: 100px; letter-spacing: -2.570px; color: #212529; }
  form { display: flex; flex-direction: column; align-items: flex-start; }
  label { display: flex; align-items: center; height: 65.130px; margin-left: -.5px; gap: 10px; font-size: 34px; letter-spacing: -.26px; color: #212529; white-space: nowrap; }
  input { box-sizing: border-box; width: 387px; height: 63px; padding: 0 3.500px 0 4px; border: 2px solid; border-color: #bdbdbd #d3d3d3 #c4c4c4 #bdbdbd; border-radius: 0; background: #fff; color: #000; font: 34px Inter, sans-serif; letter-spacing: -.35px; }
  button { width: 146px; height: 62px; margin-top: 1px; padding: 0 0 1px; border: 2px solid #ccc; border-bottom: 3px solid #b4b4b4; border-radius: 0; background: #fff; color: #000; font: 34px Inter, sans-serif; }

  .dock { position: absolute; left: 112px; top: 1967px; width: 3136px; height: 140px; box-sizing: border-box; padding-left: 6px; display: flex; border: 2px solid #454b57; border-top-width: 3px; border-radius: 10px; background: linear-gradient(90deg, #1b2031, #171b2a); }
  .app { width: 108px; height: 133px; margin-top: -3px; flex: none; overflow: visible; }
  .run { fill: #a0a5b8; }
  .split { width: 2px; height: 96px; margin: 16px 23px 0 23px; background: #5a5e6b; flex: none; }
  .split.short { height: 64px; margin-top: 32px; margin-left: 24px; margin-right: 22px; }
  .petals rect { mix-blend-mode: multiply; opacity: .9; }
  .badge-text { font: 400 22px Inter, sans-serif; fill: #fff; text-anchor: middle; }
  .oct { font: 400 15px Inter, sans-serif; fill: #fff; text-anchor: middle; }
  .day { font: 300 42px Inter, sans-serif; fill: #222; text-anchor: middle; letter-spacing: -1px; }
  .three-d { font: 400 12.500px Inter, sans-serif; fill: #222; text-anchor: middle; letter-spacing: -.5px; }
  .keynote { font: 700 4.600px Inter, sans-serif; fill: #222; }
  .slack { font: 900 42px Lato, sans-serif; fill: #151a1e; text-anchor: middle; }
</style>
